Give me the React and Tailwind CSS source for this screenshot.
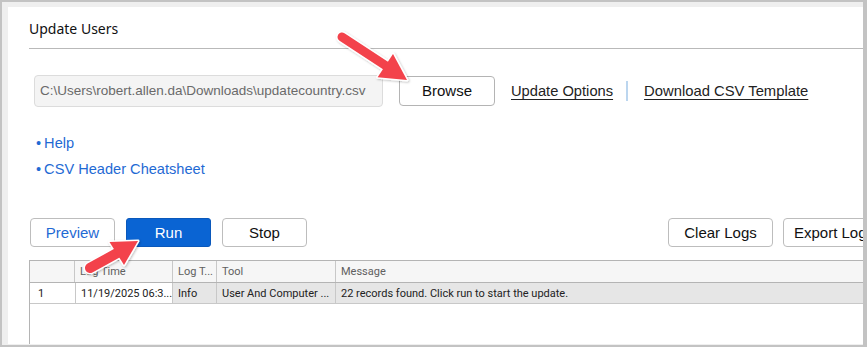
import React from 'react';

const cellHead = 'h-full leading-[22px] px-[5px] border-r border-[#c8c8c8] text-[11px] text-[#606060] whitespace-nowrap overflow-hidden';
const cellRow = 'h-full leading-[21px] px-[5px] border-r border-[#c8c8c8] text-[11px] text-[#222] whitespace-nowrap overflow-hidden';

function Arrows() {
  // red callout arrows drawn over the screenshot
  return (
    <svg className="absolute inset-0 pointer-events-none" width="867" height="347" viewBox="0 0 867 347">
      <defs>
        <filter id="sh" x="-20%" y="-20%" width="140%" height="140%">
          <feDropShadow dx="1" dy="1" stdDeviation="1.2" floodColor="#000" floodOpacity="0.25" />
        </filter>
      </defs>
      <g filter="url(#sh)">
        <line x1="342" y1="37" x2="387" y2="66.5" stroke="#fff" strokeWidth="12" strokeLinecap="round" />
        <polygon points="407,80 377.6,77.3 393,54" fill="#fff" stroke="#fff" strokeWidth="3" strokeLinejoin="round" />
        <line x1="342" y1="37" x2="387" y2="66.5" stroke="#f3424b" strokeWidth="9" strokeLinecap="round" />
        <polygon points="407,80 377.6,77.3 393,54" fill="#f3424b" />

        <line x1="90" y1="268" x2="119" y2="252" stroke="#fff" strokeWidth="13" strokeLinecap="round" />
        <polygon points="138,241 124,265 109.5,242" fill="#fff" stroke="#fff" strokeWidth="3" strokeLinejoin="round" />
        <line x1="90" y1="268" x2="119" y2="252" stroke="#f3424b" strokeWidth="10" strokeLinecap="round" />
        <polygon points="138,241 124,265 109.5,242" fill="#f3424b" />
      </g>
    </svg>
  );
}

export default function App() {
  return (
    <div className="relative w-[867px] h-[347px] overflow-hidden bg-[#c3c3c3] pl-[2px] pt-[2px] pr-[4px] pb-[2px] font-['Liberation_Sans',Arial,sans-serif]">
      <div className="w-full h-full bg-[#efefef] pl-[6px] pt-[5px] pb-[1px]">
        <div className="w-full h-full bg-white pl-[21px] flex flex-col overflow-hidden">
          {/* Title */}
          <div className="h-[42px] shrink-0 flex items-center border-b border-[#b9b9b9] pt-[1px]">
            <h1 className="text-[14px] text-[#111] font-['Noto_Sans',sans-serif]">Update Users</h1>
          </div>

          {/* File row */}
          <div className="flex items-center mt-[26px] shrink-0">
            <div className="ml-[5px] w-[349px] h-[32px] bg-[#f4f4f4] border border-[#dcdcdc] rounded-[4px] flex items-center px-[5px] text-[13.5px] text-[#6a6a6a] whitespace-nowrap">
              C:\Users\robert.allen.da\Downloads\updatecountry.csv
            </div>
            <button className="ml-[16px] w-[96px] h-[30px] bg-white border border-[#b4b4b4] rounded-[4px] text-[15px] text-[#111]">
              Browse
            </button>
            <a className="ml-[16px] text-[14.7px] text-[#222] underline underline-offset-[3px] decoration-[1px]">Update Options</a>
            <span className="ml-[13px] w-[2px] h-[20px] bg-[#bcd6ef]" />
            <a className="ml-[16px] text-[14.8px] text-[#222] underline underline-offset-[3px] decoration-[1px]">Download CSV Template</a>
          </div>

          {/* Help links */}
          <div className="mt-[27px] ml-[7px] flex flex-col gap-[6px] shrink-0 text-[14.6px] text-[#1f6ad4]">
            <div className="h-[20px] flex items-center"><span className="mr-[3px]">•</span>Help</div>
            <div className="h-[20px] flex items-center"><span className="mr-[3px]">•</span>CSV Header Cheatsheet</div>
          </div>

          {/* Buttons */}
          <div className="mt-[38px] flex items-center shrink-0 text-[15px]">
            <button className="ml-[1px] w-[85px] h-[29px] pt-[1px] bg-white border border-[#bdbdbd] rounded-[4px] text-[#1f6ad4]">Preview</button>
            <button className="ml-[11px] w-[85px] h-[29px] pt-[1px] bg-[#0a64d3] border border-[#0a58bb] rounded-[3px] text-white">Run</button>
            <button className="ml-[11px] w-[85px] h-[29px] pt-[1px] bg-white border border-[#bdbdbd] rounded-[4px] text-[#111]">Stop</button>
            <div className="flex-1" />
            <button className="w-[105px] h-[29px] pt-[1px] bg-white border border-[#bdbdbd] rounded-[4px] text-[#111] shrink-0">Clear Logs</button>
            <button className="ml-[10px] w-[100px] h-[29px] pt-[1px] bg-white border border-[#bdbdbd] rounded-[4px] text-[#111] shrink-0 -mr-[20px] text-left pl-[10px] whitespace-nowrap">Export Logs</button>
          </div>

          {/* Log grid */}
          <div className="mt-[13px] flex-1 border-l border-t border-[#b4b4b4] flex flex-col font-['Roboto',sans-serif]">
            <div className="h-[22px] flex bg-[#f6f6f6] border-b border-[#b4b4b4] shrink-0">
              <div className="w-[45px] h-full border-r border-[#c8c8c8]" />
              <div className={`${cellHead} w-[98px]`}>Log Time</div>
              <div className={`${cellHead} w-[44px]`}>Log T...</div>
              <div className={`${cellHead} w-[119px]`}>Tool</div>
              <div className="flex-1 h-full leading-[22px] px-[5px] text-[11px] text-[#606060]">Message</div>
            </div>
            <div className="h-[21px] flex border-b border-[#c8c8c8] shrink-0">
              <div className="w-[45px] h-full leading-[21px] pl-[8px] text-[11px] text-[#222] bg-white">1</div>
              <div className={`${cellRow} w-[98px] bg-white border-l border-[#c8c8c8]`}>11/19/2025 06:3...</div>
              <div className={`${cellRow} w-[44px] bg-[#e6e6e6]`}>Info</div>
              <div className={`${cellRow} w-[119px] bg-[#e6e6e6]`}>User And Computer ...</div>
              <div className="flex-1 h-full leading-[21px] px-[5px] text-[11px] text-[#222] bg-[#e6e6e6] whitespace-nowrap">22 records found. Click run to start the update.</div>
            </div>
          </div>
        </div>
      </div>
      <Arrows />
    </div>
  );
}
